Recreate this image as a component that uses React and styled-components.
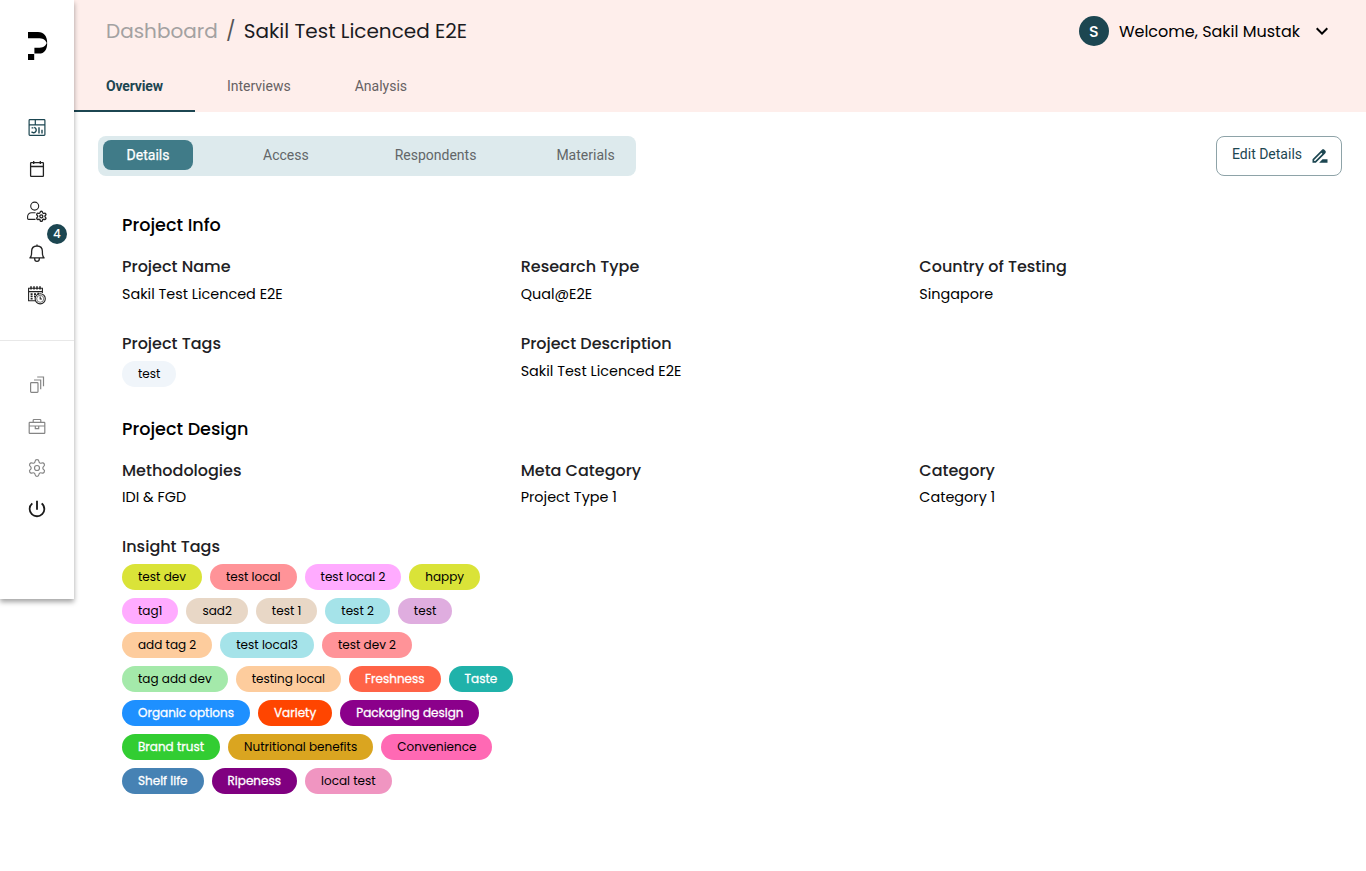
import React from 'react';
import styled, { createGlobalStyle, css } from 'styled-components';
import { Settings } from 'lucide-react';
import { MdExpandMore, MdDriveFileRenameOutline, MdPowerSettingsNew } from 'react-icons/md';

const teal = '#1c4651';
const heading = "Poppins, Inter, sans-serif";
const ui = "Roboto, sans-serif";

const GlobalStyle = createGlobalStyle`
  *, *::before, *::after { box-sizing: border-box; }
  body { margin: 0; background: #fff; font-family: ${heading}; color: #000; }
`;

const Page = styled.div`
  display: flex;
  align-items: flex-start;
  min-height: 871px;
`;

const Sidebar = styled.aside`
  position: relative;
  z-index: 1;
  flex: none;
  width: 74px;
  height: 599px;
  background: #fff;
  box-shadow: 0 3px 5px rgba(0, 0, 0, 0.36);
`;

const LogoLink = styled.div`
  display: flex;
  justify-content: center;
  height: 106px;
  padding: 32px 0 0 1px;
`;

const NavList = styled.nav`
  display: flex;
  flex-direction: column;
  align-items: center;
  color: ${(p) => p.$tone || '#222'};
`;

const NavItem = styled.div`
  position: relative;
  display: flex;
  align-items: center;
  justify-content: center;
  width: 42px;
  height: 42px;
  color: ${(p) => p.$tone || 'inherit'};
`;

const NavDivider = styled.hr`
  margin: 24px 0 22px;
  border: 0;
  border-top: 1px solid #e8e8e8;
`;

const Badge = styled.span`
  position: absolute;
  top: -8px;
  right: -9px;
  width: 20px;
  height: 20px;
  border-radius: 50%;
  background: ${teal};
  color: #fff;
  font: 500 12px/20px ${heading};
  text-align: center;
`;

const Main = styled.main`
  flex: 1;
  min-width: 0;
`;

const Header = styled.header`
  display: flex;
  flex-direction: column;
  justify-content: space-between;
  height: 112px;
  background: #feeeeb;
`;

const HeaderTop = styled.div`
  display: flex;
  align-items: center;
  justify-content: space-between;
  height: 62px;
  padding: 0 34px 0 32px;
`;

const Breadcrumb = styled.div`
  display: flex;
  align-items: center;
  font-size: 20px;
  line-height: 30px;
`;

const CrumbLink = styled.span`
  color: #a3a1a1;
`;

const CrumbSlash = styled.span`
  width: 26px;
  color: #555;
  text-align: center;
`;

const CrumbCurrent = styled.span`
  color: #1b1b1f;
`;

const User = styled.div`
  display: flex;
  align-items: center;
  font-size: 16px;
`;

const Avatar = styled.span`
  width: 30px;
  height: 30px;
  margin-right: 10px;
  border-radius: 50%;
  background: ${teal};
  color: #fff;
  font-weight: 500;
  line-height: 31px;
  text-align: center;
`;

const Chevron = styled(MdExpandMore)`
  margin: 0 -2px 0 10px;
  font-size: 24px;
`;

const Tabs = styled.div`
  display: flex;
`;

const Tab = styled.div`
  height: 50px;
  padding: 0 32px;
  color: #666163;
  font: 400 14px/48px ${ui};
  ${(p) => p.$active && css`
    border-bottom: 2px solid ${teal};
    color: ${teal};
    font-weight: 700;
    letter-spacing: -0.15px;
  `}
`;

const Toolbar = styled.div`
  display: flex;
  align-items: center;
  justify-content: space-between;
  padding: 24px 24px 0;
`;

const Segments = styled.div`
  display: flex;
  align-items: flex-start;
  width: 538px;
  height: 40px;
  padding: 4px 5px;
  border-radius: 8px;
  background: #ddeaed;
`;

const Segment = styled.div`
  height: 30px;
  margin-left: ${(p) => p.$lead || 0}px;
  border-radius: 8px;
  color: #626668;
  font: 400 14px/30px ${ui};
  ${(p) => p.$active && css`
    width: 90px;
    background: #407b88;
    color: #fff;
    -webkit-text-stroke: 0.25px #fff;
    text-align: center;
  `}
`;

const EditButton = styled.button`
  display: flex;
  align-items: center;
  justify-content: space-between;
  width: 126px;
  height: 40px;
  padding: 0 11px 4px 15px;
  border: 1px solid #8ea3a8;
  border-radius: 8px;
  background: #fff;
  color: ${teal};
  font: 400 14px/20px ${ui};
`;

const EditIcon = styled(MdDriveFileRenameOutline)`
  margin-top: 4px;
  font-size: 20px;
`;

const Content = styled.div`
  padding: 0 48px;
`;

const Section = styled.section`
  padding-top: ${(p) => p.$top}px;
`;

const SectionTitle = styled.h2`
  margin: 0 0 17px;
  font-size: 17.6px;
  font-weight: 500;
  line-height: 26px;
`;

const Grid = styled.div`
  display: grid;
  grid-template-columns: repeat(3, 1fr);
  row-gap: 27px;
`;

const Label = styled.div`
  color: #212124;
  font-size: 16px;
  font-weight: 500;
  line-height: 24px;
`;

const Value = styled.div`
  padding-top: ${(p) => (p.$tight ? 3 : 4)}px;
  font-size: 14.4px;
  line-height: 22px;
`;

const TagList = styled.div`
  display: flex;
  flex-wrap: wrap;
  gap: 8px;
  padding-top: 5px;
`;

const Tag = styled.span`
  height: 26px;
  padding: 0 16px;
  border-radius: 13px;
  background: ${(p) => p.$bg};
  color: #000;
  font-size: 12px;
  line-height: 26px;
  white-space: nowrap;
  ${(p) => p.$light && css`
    color: #fff;
    -webkit-text-stroke: 0.3px #fff;
  `}
`;

const Logo = () => (
  <svg width="20" height="28" viewBox="0 0 20 28">
    <path d="M0 0H10C16 0 19.2 4.5 19.2 10.8H18.4C17.8 7.6 14.5 6.2 10 6.2H0Z" />
    <path d="M19.2 11.2C19.2 17.5 16.5 21.6 11 21.6H6.4V15.8H10C14.5 15.8 17.8 14.4 18.4 11.2Z" />
    <path d="M0 22H6.2V28H0Z" />
  </svg>
);

const Stroke = ({ size = 22, w = 1.1, children }) => (
  <svg width={size} height={size} viewBox={`0 0 ${size} ${size}`} fill="none" stroke="currentColor" strokeWidth={w}>
    {children}
  </svg>
);

const DashboardIcon = () => (
  <Stroke w={1.2}>
    <rect x="3.1" y="3.6" width="15.8" height="15.8" rx="0.8" />
    <path d="M3 8.8H19M9.3 3.6V8.8M5.6 11.8H7.4" />
    <path d="M8.2 11.4A2.7 2.7 0 1 1 5.5 15.8M13 11.2V17.5M16 13.8V17.5" strokeWidth="1.4" />
  </Stroke>
);

const CalendarIcon = () => (
  <Stroke w={1.3}>
    <rect x="4.6" y="4.6" width="12.8" height="13.8" rx="0.6" />
    <path d="M4.6 8.5H17.4M7.7 3V6M14.3 3V6" />
  </Stroke>
);

const UserGearIcon = () => (
  <Stroke w={1.1}>
    <circle cx="8.7" cy="6.1" r="4" />
    <path d="M9.5 19.4H2.5Q1.6 19.4 1.6 18.5V16.6C1.6 14.2 3.2 12.8 5.6 12.8H9.5" />
    <g transform="translate(9.2 10.2) scale(.51)" strokeWidth="2.6">
      <path d="M9.671 4.136a2.34 2.34 0 0 1 4.659 0 2.34 2.34 0 0 0 3.319 1.915 2.34 2.34 0 0 1 2.33 4.033 2.34 2.34 0 0 0 0 3.831 2.34 2.34 0 0 1-2.33 4.033 2.34 2.34 0 0 0-3.319 1.915 2.34 2.34 0 0 1-4.659 0 2.34 2.34 0 0 0-3.32-1.915 2.34 2.34 0 0 1-2.33-4.033 2.34 2.34 0 0 0 0-3.831A2.34 2.34 0 0 1 6.35 6.051a2.34 2.34 0 0 0 3.319-1.915" />
      <circle cx="12" cy="12" r="3" />
    </g>
  </Stroke>
);

const BellIcon = () => (
  <Stroke w={1.3}>
    <path d="M3.4 15.9H18.6M4 15.8C5.8 14.2 5.6 12 5.6 9.6C5.6 6 8 4 11 4S16.4 6 16.4 9.6C16.4 12 16.2 14.2 18 15.8M11 2.4V4M8.7 16.2V17A2.3 2.3 0 0 0 13.3 17V16.2" />
  </Stroke>
);

const ScheduleIcon = () => (
  <Stroke w={1.1}>
    <path d="M9.5 16.8H2.6V4.2H16.4V9M2.6 7.6H16.4" />
    <path d="M5 2.2V5.4M8 2.2V5.4M11 2.2V5.4M14 2.2V5.4" strokeWidth="1.5" />
    <path d="M4.6 10.1H6.6M8 10.1H10M4.6 12.4H6.6M8 12.4H9M4.6 14.7H6.6M11.4 9.6H13" strokeWidth="1.6" />
    <circle cx="14.2" cy="14.8" r="5.1" />
    <circle cx="14.2" cy="14.8" r="3.5" strokeWidth="0.6" />
    <path d="M14.2 12.6V15H16" />
  </Stroke>
);

const CopiesIcon = () => (
  <Stroke w={1.2}>
    <rect x="4.6" y="9.6" width="7.4" height="9.8" rx="0.8" />
    <path d="M8 7H14.7V16.3M11.2 4H17.5V13.3" />
  </Stroke>
);

const BriefcaseIcon = () => (
  <Stroke w={1.2}>
    <rect x="3.2" y="7.4" width="15.6" height="11" rx="0.6" />
    <path d="M7.2 7.2V5.3Q7.2 4.5 8 4.5H14Q14.8 4.5 14.8 5.3V7.2M3.2 11H18.8M9.3 11V13.7H12.7V11" />
  </Stroke>
);

const segments = [
  { name: 'Details', active: true },
  { name: 'Access', lead: 70 },
  { name: 'Respondents', lead: 86 },
  { name: 'Materials', lead: 80 },
];

const insightTags = [
  ['test dev', '#dae338'],
  ['test local', '#ff9398'],
  ['test local 2', '#ffabff'],
  ['happy', '#dae338'],
  ['tag1', '#ffabff'],
  ['sad2', '#e8d7c6'],
  ['test 1', '#e8d7c6'],
  ['test 2', '#a5e3e9'],
  ['test', '#dfaddf'],
  ['add tag 2', '#fdcc9d'],
  ['test local3', '#a5e3e9'],
  ['test dev 2', '#ff9398'],
  ['tag add dev', '#a4e9aa'],
  ['testing local', '#fdcc9d'],
  ['Freshness', '#ff6347', true],
  ['Taste', '#20b2aa', true],
  ['Organic options', '#1e90ff', true],
  ['Variety', '#ff4500', true],
  ['Packaging design', '#8b008b', true],
  ['Brand trust', '#32cd32', true],
  ['Nutritional benefits', '#daa520'],
  ['Convenience', '#ff69b4'],
  ['Shelf life', '#4682b4', true],
  ['Ripeness', '#800080', true],
  ['local test', '#f095c1'],
];

const Field = ({ label, value, tight, children }) => (
  <div>
    <Label>{label}</Label>
    {value ? <Value $tight={tight}>{value}</Value> : children}
  </div>
);

export default function App() {
  return (
    <Page>
      <GlobalStyle />
      <Sidebar>
        <LogoLink><Logo /></LogoLink>
        <NavList>
          <NavItem $tone={teal}><DashboardIcon /></NavItem>
          <NavItem><CalendarIcon /></NavItem>
          <NavItem><UserGearIcon /></NavItem>
          <NavItem><BellIcon /><Badge>4</Badge></NavItem>
          <NavItem><ScheduleIcon /></NavItem>
        </NavList>
        <NavDivider />
        <NavList $tone="#858585">
          <NavItem><CopiesIcon /></NavItem>
          <NavItem><BriefcaseIcon /></NavItem>
          <NavItem><Settings size={20} strokeWidth={1.4} /></NavItem>
          <NavItem $tone="#1a1a1a"><MdPowerSettingsNew size={22} viewBox="0 -1 24 24" transform="translate(0 -2)" /></NavItem>
        </NavList>
      </Sidebar>
      <Main>
        <Header>
          <HeaderTop>
            <Breadcrumb>
              <CrumbLink>Dashboard</CrumbLink>
              <CrumbSlash>/</CrumbSlash>
              <CrumbCurrent>Sakil Test Licenced E2E</CrumbCurrent>
            </Breadcrumb>
            <User>
              <Avatar>S</Avatar>
              Welcome, Sakil Mustak
              <Chevron />
            </User>
          </HeaderTop>
          <Tabs>
            <Tab $active>Overview</Tab>
            <Tab>Interviews</Tab>
            <Tab>Analysis</Tab>
          </Tabs>
        </Header>
        <Toolbar>
          <Segments>
            {segments.map((s) => (
              <Segment key={s.name} $active={s.active} $lead={s.lead}>{s.name}</Segment>
            ))}
          </Segments>
          <EditButton>Edit Details<EditIcon /></EditButton>
        </Toolbar>
        <Content>
          <Section $top={36}>
            <SectionTitle>Project Info</SectionTitle>
            <Grid>
              <Field label="Project Name" value="Sakil Test Licenced E2E" />
              <Field label="Research Type" value="Qual@E2E" />
              <Field label="Country of Testing" value="Singapore" />
              <Field label="Project Tags">
                <TagList><Tag $bg="#f0f5fa">test</Tag></TagList>
              </Field>
              <Field label="Project Description" value="Sakil Test Licenced E2E" />
            </Grid>
          </Section>
          <Section $top={29}>
            <SectionTitle>Project Design</SectionTitle>
            <Grid>
              <Field tight label="Methodologies" value="IDI & FGD" />
              <Field tight label="Meta Category" value="Project Type 1" />
              <Field tight label="Category" value="Category 1" />
              <Field label="Insight Tags">
                <TagList>
                  {insightTags.map(([name, bg, light]) => (
                    <Tag key={name} $bg={bg} $light={light}>{name}</Tag>
                  ))}
                </TagList>
              </Field>
            </Grid>
          </Section>
        </Content>
      </Main>
    </Page>
  );
}
